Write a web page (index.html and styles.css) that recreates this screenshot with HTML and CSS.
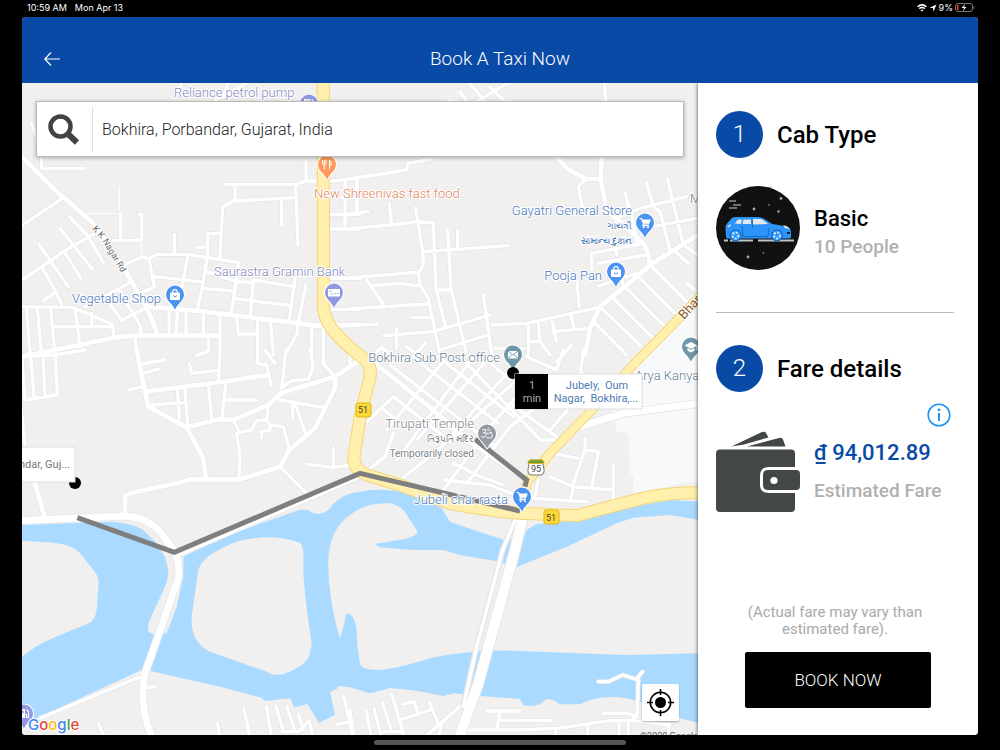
FILE: index.html
```html
<!DOCTYPE html>
<html lang="en">
<head>
  <meta charset="UTF-8" />
  <meta name="viewport" content="width=device-width, initial-scale=1.0"/>
  <title>Book A Taxi Now</title>
  <link rel="stylesheet" href="styles.css">
</head>
<body>

  <!-- Status bar -->
  <div class="statusbar">
    <span>10:59 AM</span>
    <span>Mon Apr 13</span>
    <div class="status-icons">
      <svg width="10" height="8" viewBox="0 0 10 8" fill="none" stroke="#fff" stroke-width="1.5"><path d="M.5 2.8Q5-1 9.500 2.800M2.200 4.600Q5 2.300 7.800 4.600"/><path d="M3.500 6L5 7.600 6.500 6Q5 5 3.500 6Z" fill="#fff" stroke="none"/></svg>
      <svg width="8" height="8" viewBox="0 0 8 8"><path d="M7.500.5L4.500 7.500 4 4 .5 3.700Z" fill="#fff"/></svg>
      <span>9%</span>
      <svg width="20" height="9" viewBox="0 0 20 9"><rect x=".5" y=".5" width="17" height="8" rx="2.500" fill="none" stroke="#777"/><path d="M18.500 3v3q1-.5 1-1.500t-1-1.500Z" fill="#777"/><rect x="2" y="2" width="1.500" height="5" fill="#ff3b30"/><path d="M10 1L6.500 5H9L8 8l3.500-4H9Z" fill="#fff"/></svg>
    </div>
  </div>

  <div class="app">
    <header>
      <button class="back-btn" aria-label="Back">
        <svg width="16" height="14" viewBox="0 0 16 14" fill="none" stroke="#fff" stroke-width="1.200"><path d="M16 7H1M7 .5L.8 7 7 13.500"/></svg>
      </button>
      <h1>Book A Taxi Now</h1>
    </header>

    <main>
      <!-- Map -->
      <div class="map">
        <svg class="map-canvas" viewBox="22 83 676 652" preserveAspectRatio="xMinYMin slice">
          <defs>
            <path id="pin" d="M0 0C-1-5-9-9-9-15.500A9 9 0 1 1 9-15.500C9-9 1-5 0 0Z"/>
            <g id="cart"><path d="M-5.500-19.500h2l2 5.500h5l1.500-4h-7.500M-1.500-14l-.7 1.700H4" fill="none" stroke="#fff" stroke-width="1.200"/><path d="M-2.700-18h7.500L3.500-14.500h-5Z" fill="#fff"/><circle cx="-1.300" cy="-10.700" r="1" fill="#fff"/><circle cx="3" cy="-10.700" r="1" fill="#fff"/></g>
            <g id="bag"><rect x="-5" y="-17.500" width="10" height="7.500" rx="1" fill="#fff"/><path d="M-2.300-17v-1a2.300 2.300 0 0 1 4.600 0v1" fill="none" stroke="#fff" stroke-width="1.200"/></g>
            <g id="fuel"><path d="M-5-20h6v9h-6Z" fill="#fff"/><path d="M-3.500-18.500h3v3h-3Z" fill="#8f98e0"/><path d="M1-14.500h1.500v3h2v-6l-2-2" fill="none" stroke="#fff" stroke-width="1.200"/></g>
            <path id="kk" d="M92 229L101 239L125 279"/>

            <!-- road geometry is kept at three units per map pixel -->
            <g id="streets">
              <path d="M545 250L530 285M685 250L670 290M645 300L740 250M1345 300L1375 305M1380 275L1405 310M1410 250L1455 305M1420 310L1540 240M1470 260L1515 305M1813 249L1818 305M95 370L120 440"/>
              <path transform="translate(60 465)" d="M65 5V40H195M5 212L130 128M5 375L65 335L130 290L230 232M148 185L205 245L250 322M120 220L217 342M57 268L145 395M65 335L105 405L125 448M70 437L105 412M133 290L183 370M302 175V255M280 256H365V178H358M318 328L368 305L385 312L410 298H500L655 322L650 375L632 480M463 238V295M530 277H563V236H600M563 277V300M612 88H830L858 78H895M858 20V78M645 90V135M827 128L640 138L608 155L600 305M785 135V210M827 92L834 270M388 315L403 395L370 412M403 365L545 380M503 305L488 385L470 460M563 300L548 390L532 465M560 350L650 380L700 382L690 485M548 400L640 408M700 375L825 395M640 430L810 452M825 370L808 495M858 390L835 500L830 540L795 600M335 380L195 455M265 440L305 495L380 458M300 410L360 510L363 535M10 455L160 458L260 500L278 510L282 548M100 515H278M20 460L30 600M52 460L65 600M92 460L105 600M165 460L180 575M215 475V508M345 548L352 600M447 472V535M472 475L468 535M498 475V535M550 480V535M600 485V600M565 548V590L530 600M650 490L655 537H710M713 500V600M752 500L760 600M875 515V600M910 515V600M930 370H1020M935 463H1020M930 178H1020M930 222H1020M975 75V220M1010 70V170M925 80L1020 68M965 128H1020"/>
              <path transform="translate(1050 465)" d="M0 72L168 45L175 25L245 12M22 70V170M0 175L55 170M0 220L125 210L195 200L250 203L258 400L285 510M118 145L125 210M197 158L218 290L220 330L205 355L210 390L235 430L268 590M0 368L205 352M50 375L105 455M0 462L105 455L235 447M65 393L145 385L210 393M187 488H240M0 508H80M100 542L250 530L420 480M140 520V580M218 290L475 272M293 225L303 400L348 590M323 228V275M260 405H300M400 420L410 490L425 600M268 585L415 540M425 510L530 505L745 457M535 505V600M565 500L570 560L600 600M605 490L620 560M610 530L715 520M663 478L672 520M680 370L688 455M540 560H570M75 595L95 578L120 595M170 575L210 605M225 565L190 605M435 580H520M620 620L665 570M800 190L870 160L1010 125M905 215L1040 190M825 115L845 180L860 260M890 85L910 155L930 170L960 285M952 70L1000 270L1044 300M970 285L1015 325M725 345V295L880 265M745 325L895 298M745 393L890 345M800 280V300M810 350L820 390M905 335L1010 440M870 370L980 480M830 400L945 515M790 430L910 550M755 460L870 570M730 500L830 600M1010 385L1035 405M700 170L685 95L708 72"/>
              <path transform="translate(60 1050)" d="M0 20L105 15L195 0M30 0L42 140M68 0L75 138M105 0L112 135L15 150M5 20L15 150M0 150L15 285M365 42L433 30M370 70L415 57M327 120L370 110M600 0L595 95M508 42L515 70L590 62M530 15L565 5M472 115L478 205M495 115L503 225M390 165L495 158M565 102L575 208M618 98L605 208M615 150H710M713 0V40L740 45L753 105M735 0L765 40M798 0L785 115M790 110L815 92L865 88L880 50L870 0M910 0V40L945 80M780 150L910 172M818 155V205M825 160L860 260M745 165L740 210L750 225L790 230L808 300M750 225V240L725 245V262M740 210L710 212L695 240L660 248M640 210L660 248L650 250L660 325L657 380M780 350L860 430M863 343L940 352L1000 345M940 293V350M990 0V40"/>
              <path transform="translate(1050 1050)" d="M130 140L300 275M100 178L175 240M120 45L430 285M200 30L445 220M265 20L490 200M330 20L570 268M400 20L480 90M480 160L620 260M50 215L125 145M110 240L275 40M140 330L200 250L370 20M150 390L265 300M200 270L420 20M265 300L480 60M300 270L500 90M280 420L420 230L500 140M350 400L480 230L560 170M60 355L105 320L130 250M285 390L420 405L485 430M310 340L380 375L460 405M600 380L670 410L790 420M790 345V450M550 445L710 455M565 390L555 440M670 410L662 450M610 310L685 325M705 265V300L745 305L725 415M705 300L670 400M570 270H615M530 20L620 60M640 0L620 60M700 0L690 80M640 195L700 130L700 70M600 240L640 195"/>
              <path transform="translate(60 1650)" d="M60 505L350 385L375 378M380 412L405 410M235 522L255 565M593 522L600 565M672 475L690 565M740 470L755 565M768 468L790 545M800 468L825 545M835 492L850 540M785 545H835L868 512L880 565M972 440L1000 565M950 523L990 515"/>
              <path transform="translate(1050 1650)" d="M0 480L12 565M48 480L65 565M72 475L95 565M98 458L125 545M125 433L160 550M158 463L192 455L205 490M150 510L240 480M238 458L265 520M335 465L220 565M100 545H160M275 520L265 565M412 483H508M450 487L440 540M450 511H603M355 540H500L620 535L780 512H850L960 525M617 545V565M713 530V565M760 490H835L860 500M807 515V565M835 515V565M955 520V565M745 395H775L818 375L860 388M878 365L865 380L862 490L845 510"/>
            </g>
            <g id="avenues">
              <path transform="translate(60 465)" d="M0 0L35 35L105 105L220 205L245 240L318 350L380 458L410 530M380 455L540 468L890 512L1020 510M5 605L282 548L345 542H595"/>
              <path transform="translate(1050 465)" d="M620 5L650 40L708 72H752M755 5L752 72L770 170L800 190L880 265L895 295L900 330L1044 240M900 330L825 395L750 455L720 520L705 600"/>
              <path transform="translate(60 1050)" d="M45 400L65 470L72 495M350 0L375 125L385 170L500 232L550 325L557 380M375 125L560 102L745 75M500 232L600 208L640 210L745 165L785 128L945 80L1020 30M945 80V115L885 235L808 300L780 350M315 490V440L330 430L470 400L510 388H660L780 350"/>
              <path transform="translate(1050 1050)" d="M75 40L250 180L360 275L530 390"/>
            </g>
            <g id="arterials">
              <path d="M55 1562L370 1548Q440 1550 480 1595L525 1655Q545 1710 530 1750L435 2020Q415 2110 455 2210M1740 1280L1870 1240L2100 1210"/>
              <path d="M535 1660L1080 1425"/>
            </g>
            <path id="highway51" d="M970 240V920Q975 960 995 985Q1030 1030 1090 1075Q1120 1100 1108 1140L1080 1250L1062 1370Q1060 1410 1100 1425L1200 1455L1350 1510Q1450 1530 1560 1540L1730 1547Q1850 1515 1950 1490Q2010 1478 2110 1478"/>
            <path id="highway95" d="M2110 880L1900 1095L1790 1215L1650 1360L1580 1450L1560 1535"/>
          </defs>

          <rect class="land" x="0" y="0" width="720" height="760"/>
          <g transform="scale(.33333)">
            <path class="campus" d="M2100 905L1930 1070L1830 1195L1850 1295L1885 1300L1890 1420L1900 1430V1480L2100 1440Z"/>
            <path class="water" d="M60 1575L340 1565Q400 1570 430 1590L465 1625L495 1670L505 1710Q505 1740 495 1760L445 1870V1895L460 1902L500 1900L530 1820L550 1730V1670L660 1615L890 1532Q910 1525 930 1533Q950 1553 985 1530Q1020 1480 1080 1475Q1130 1464 1200 1475L1270 1500L1325 1525L1350 1565L1450 1600L1515 1620H1570L1580 1590L1610 1572L1750 1560L1900 1520L2010 1500L2100 1505V2170L2040 2155L1920 2105Q1840 2080 1770 2100L1740 2113H1680L1660 2100L1640 2097L1620 2113L1595 2118L1570 2116L1560 2097L1440 2088L1360 2080L1330 2088L1250 2072L1170 2064L1110 2080L1050 2062L1015 2058L1010 2068L990 2075L1005 2145L957 2168L922 2112L882 2122L872 2095L840 2098L795 2103L785 2093L660 2060L480 2020L430 2008L120 2150L60 2180Z"/>
            <path class="land" d="M60 1622L160 1628Q220 1635 240 1660L285 1715Q300 1740 295 1760L290 1830Q285 1860 270 1868L150 1918Q110 1935 60 1975Z"/>
            <path class="land" d="M630 1665Q700 1620 760 1615Q830 1605 900 1628Q910 1640 910 1660V1720Q915 1800 935 1930L928 1970Q910 2000 850 2023Q820 2028 800 2015L630 1955Q570 1925 575 1850L595 1710Q600 1690 630 1665Z"/>
            <path class="land" d="M1050 1545Q1100 1505 1170 1510Q1210 1520 1220 1545L1250 1590Q1260 1605 1210 1618L1125 1632L1140 1642L1240 1650L1330 1650L1380 1665L1500 1685L1545 1703L1700 1640L1850 1570L1900 1553L2010 1545L2100 1560V1960L1880 1965L1540 1952Q1400 1950 1290 1975Q1180 2010 1130 2010Q1085 2010 1080 1990Q1070 1940 1070 1890Q1065 1850 1045 1840Q1035 1840 1035 1860L1020 1917Q985 1800 985 1690Q985 1590 1050 1545Z"/>
            <path class="lane" d="M358 640H268M358 560V640M425 721V760"/>

            <use href="#streets" class="street-edge"/>
            <use href="#avenues" class="avenue-edge"/>
            <use href="#arterials" class="arterial-edge"/>
            <use href="#streets" class="street"/>
            <use href="#avenues" class="avenue"/>
            <use href="#arterials" class="arterial"/>

            <!-- bridge -->
            <path class="bridge-edge" d="M1568 1550L1545 1650L1435 2050L1375 2220"/>
            <path class="avenue-edge" d="M1545 1560L1508 1650L1430 1940L1390 2120"/>
            <path class="street" d="M1545 1560L1508 1650L1430 1940L1390 2120"/>
            <path class="bridge" d="M1568 1550L1545 1650L1435 2050L1375 2220"/>

            <use href="#highway95" class="minor-highway-edge"/>
            <use href="#highway51" class="highway-edge"/>
            <use href="#highway95" class="minor-highway"/>
            <use href="#highway51" class="highway"/>

            <path class="route" d="M232 1553L523 1657L1080 1420L1560 1533M1425 1318L1580 1440L1575 1460"/>
          </g>

          <!-- road numbers -->
          <g class="shield">
            <rect x="356" y="403" width="15" height="14" rx="2"/><text x="363" y="413">51</text>
            <rect x="544" y="510" width="15" height="14" rx="2"/><text x="551" y="521">51</text>
            <path class="shield-white" d="M528 462l2-2h12l2 2-1 3q3 9-2 10h-10q-5-1-2-10Z"/><path d="M528 461.500l2-1.500h12l2 1.500-.5 2h-15Z" fill="#5f9e3c"/><text x="536" y="472">95</text>
          </g>

          <!-- place labels -->
          <g class="labels">
            <text class="road-name"><textPath href="#kk">K K Nagar Rd</textPath></text>
            <text class="highway-name" transform="translate(684 320) rotate(-48)">Bhar</text>
            <text class="civic" x="690" y="203">M</text>
            <text class="fuel" x="174" y="97">Reliance petrol pump</text>
            <text class="food" x="314" y="198">New Shreenivas fast food</text>
            <text class="fuel" x="214" y="276">Saurastra Gramin Bank</text>
            <text class="shop" x="72" y="303">Vegetable Shop</text>
            <text class="shop end" x="632" y="215">Gayatri General Store</text>
            <text class="shop end local" x="632" y="229">ગાયત્રી</text>
            <text class="shop end local" x="632" y="244">સામાન્ય દુકાન</text>
            <text class="shop end" x="602" y="280">Pooja Pan</text>
            <text class="civic end" x="500" y="362">Bokhira Sub Post office</text>
            <text class="civic" x="635" y="380">Arya Kanya</text>
            <text class="temple end" x="474" y="428">Tirupati Temple</text>
            <text class="temple end local" x="474" y="442">તિરૂપતિ મંદિર</text>
            <text class="temple end small" x="474" y="457">Temporarily closed</text>
            <text class="shop end" x="508" y="504">Jubeli char rasta</text>
          </g>

          <!-- pins -->
          <g class="pin fuel-pin" transform="translate(309 119)"><use href="#pin"/><use href="#fuel"/></g>
          <g class="pin fuel-pin" transform="translate(24 729)"><use href="#pin"/><use href="#fuel"/></g>
          <g class="pin food-pin" transform="translate(327 180)"><use href="#pin"/><path d="M-4.500-20v3q0 1.500 1.700 1.500T-1-17v-3M-2.700-20v9.500M2.500-10.500v-9.500q2 1 2 5h-2" fill="none" stroke="#fff" stroke-width="1.300"/></g>
          <g class="pin bank-pin" transform="translate(334 308)"><use href="#pin"/><rect x="-6" y="-19" width="12" height="7.500" fill="#fff" stroke="none"/><path d="M-4.500-17h2M-3-14h1.500M0-14.500h1.500M3-14.500h1.500" stroke="#8f98e0" stroke-width="1.500"/></g>
          <g class="pin shop-pin" transform="translate(175 310)"><use href="#pin"/><use href="#bag"/><path d="M-2-14.500q2 3 4 0" fill="none" stroke="#4a94f0"/></g>
          <g class="pin shop-pin" transform="translate(645 238)"><use href="#pin"/><use href="#cart"/></g>
          <g class="pin shop-pin" transform="translate(616 287)"><use href="#pin"/><use href="#bag"/><path d="M-2-14.500q2 3 4 0" fill="none" stroke="#4a94f0"/></g>
          <g class="pin shop-pin" transform="translate(522 512)"><use href="#pin"/><use href="#cart"/></g>
          <g class="pin civic-pin" transform="translate(513 370)"><use href="#pin"/><rect x="-5" y="-19" width="10" height="7.500" fill="#fff" stroke="none"/><path d="M-5-19L0-15 5-19M-5-11.500L-1.500-15M5-11.500L1.500-15" fill="none" stroke="#6f97a8"/></g>
          <g class="pin civic-pin" transform="translate(691 362)"><use href="#pin"/><path d="M-6.500-16.500L0-20 6.500-16.500 0-13ZM-3.500-14v2.500L0-9.500l3.500-2V-14L0-12Z" fill="#fff" stroke="none"/><path d="M6-16v4.500" stroke="#fff"/></g>
          <g class="pin temple-pin" transform="translate(487 449)"><use href="#pin"/><path d="M-5-19q4-1.500 3.500 1t-2.500 1.500q4 0 3 3t-5 1M-1-16q3 1.500 4-.5t2 2-2.500 3.500-3-1M-.5-19.500q2 2 4 0M1.500-21.500v1" fill="none" stroke="#fff" stroke-width="1.300"/></g>

          <!-- pick-up and drop -->
          <circle cx="513" cy="373" r="6"/>
          <circle cx="75" cy="483" r="6"/>
          <g class="stop">
            <rect class="stop-card" x="515" y="374" width="127" height="35"/>
            <rect x="515" y="374" width="33" height="35"/>
            <text class="eta" x="532" y="389">1</text>
            <text class="eta" x="532" y="402">min</text>
            <text class="address" x="597" y="389">Jubely, &nbsp;Oum</text>
            <text class="address" x="596" y="402">Nagar, &nbsp;Bokhira,...</text>
          </g>
          <g class="stop">
            <rect class="stop-card" x="10" y="447" width="65" height="35"/>
            <text class="from" x="70" y="468">ndar, Guj...</text>
          </g>

          <text class="google" x="28" y="730"><tspan fill="#4285f4">G</tspan><tspan fill="#ea4335">o</tspan><tspan fill="#fbbc05">o</tspan><tspan fill="#4285f4">g</tspan><tspan fill="#34a853">l</tspan><tspan fill="#ea4335">e</tspan></text>
          <text class="copyright" x="640" y="739">©2020 Google</text>
        </svg>

        <form class="search">
          <label for="pickup">
            <svg width="32" height="32" viewBox="0 0 32 32" fill="none" stroke="#424242" aria-label="Pick-up location"><circle cx="12.500" cy="12.500" r="10" stroke-width="4.500"/><path d="M20 20L29 28.500" stroke-width="6"/></svg>
          </label>
          <input type="text" id="pickup" value="Bokhira, Porbandar, Gujarat, India">
        </form>

        <button class="locate-btn" aria-label="My location">
          <svg width="27" height="27" viewBox="0 0 27 27" fill="none" stroke="#000" stroke-width="1.600"><circle cx="13.500" cy="13.500" r="10.200"/><circle cx="13.500" cy="13.500" r="5.500" fill="#000" stroke="none"/><path d="M13.500 0v6M13.500 21v6M0 13.500h6M21 13.500h6"/></svg>
        </button>
      </div>

      <!-- Booking details -->
      <aside>
        <section>
          <h2><span class="step">1</span>Cab Type</h2>
          <div class="row cab">
            <svg width="84" height="84" viewBox="0 0 84 84">
              <circle cx="42" cy="42" r="42" fill="#111"/>
              <path d="M13 15h7M17 19h8M13 22h8" stroke="#ccc" stroke-width="1.200"/>
              <g fill="#aaa"><circle cx="38" cy="23" r="1.400"/><circle cx="65" cy="12.500" r="1.400"/><circle cx="62.500" cy="25.500" r="1.200"/><circle cx="53" cy="19" r=".8"/><circle cx="32" cy="71" r="1.400"/><circle cx="47.500" cy="67" r=".8"/></g>
              <path d="M8 54.500h4M14 54.500h23M42 54.500h36" stroke="#bfc5c5" stroke-width="2"/>
              <path d="M10 51l-.5-10q0-2 2-4l3.500-4q1-2 5-2h22q4 0 8 3l6 4q10 1 17 4 2 1 2 5v4q0 1.500-3 1.500H13q-3 0-3-1.500Z" fill="#2b95fb"/>
              <path d="M19 37.500l2-3q.5-1 2-1h3l-1 4.500ZM27.500 33.500h7.500v4.500h-8.500ZM37 33h7q3 0 8 5l-15 .5Z" fill="#e4e8ec"/>
              <path d="M11 41l4-3.500-1 3.500ZM67 39q5 1 7 4l-5-1Z" fill="#e4e8ec"/>
              <path d="M26.500 50.500H52M36 33l1 9M26 40l1 10M53 42l-1 8" stroke="#1769bd" fill="none"/>
              <path d="M71 47h3" stroke="#123" stroke-width="2"/>
              <g fill="#2b95fb" stroke="#155fae"><circle cx="19.500" cy="49.500" r="5.500"/><circle cx="61" cy="49.500" r="5.500"/></g>
              <g fill="none" stroke="#d6e9fb" stroke-width="2" stroke-dasharray="2 1.500"><circle cx="19.500" cy="49.500" r="3"/><circle cx="61" cy="49.500" r="3"/></g>
            </svg>
            <div>
              <p class="name">Basic</p>
              <p class="sub">10 People</p>
            </div>
          </div>
        </section>

        <hr>

        <section>
          <h2><span class="step">2</span>Fare details</h2>
          <button class="info-btn" aria-label="Fare information">
            <svg width="24" height="24" viewBox="0 0 24 24" fill="none" stroke="#1e96f5" stroke-width="2"><circle cx="12" cy="12" r="10.800" stroke-width="1.600"/><path d="M12 10v8"/><circle cx="12" cy="6.800" r="1.400" fill="#1e96f5" stroke="none"/></svg>
          </button>
          <div class="row fare">
            <svg width="84" height="81" viewBox="0 0 84 81" fill="#444747">
              <path d="M15.500 15.500L46 1q3-1 4 1l2.500 4.500L28 13.500ZM31 15.500L63 7q3-1 4 1.500l2.500 7Z"/>
              <path d="M4 18.500h71q4 0 4 4V36H53q-9 0-9 9v9q0 8 9 8h26v15q0 4-4 4H4q-4 0-4-4V22.500q0-4 4-4Z"/>
              <path d="M52 39h28q4 0 4 4v12q0 4-4 4H52q-5 0-5-5V44q0-5 5-5Z"/>
              <circle cx="58" cy="49.500" r="3.600" fill="#fff"/>
            </svg>
            <div>
              <p class="name amount">₫ 94,012.89</p>
              <p class="sub">Estimated Fare</p>
            </div>
          </div>
        </section>

        <div class="book">
          <p>(Actual fare may vary than estimated fare).</p>
          <button class="book-btn">BOOK NOW</button>
        </div>
      </aside>
    </main>
  </div>

  <div class="home-bar"></div>

</body>
</html>
```
FILE: styles.css
```css
:root {
  --blue: #084aa6;
  --grey: #a9a9a9;
}

* { box-sizing: border-box; }

body {
  margin: 0;
  min-height: 100vh;
  display: flex;
  flex-direction: column;
  font-family: Roboto, 'Noto Sans', sans-serif;
  background: #000;
  color: #000;
}

button {
  border: none;
  padding: 0;
  background: none;
  font-family: inherit;
  cursor: pointer;
}

svg { display: block; }
p, h1, h2 { margin: 0; }

.statusbar {
  display: flex;
  align-items: center;
  gap: 8px;
  height: 17px;
  padding: 0 25px 2px 27px;
  color: #fff;
  font-family: Inter, sans-serif;
  font-size: 9px;
  line-height: 15px;
}

.status-icons {
  display: flex;
  align-items: center;
  gap: 2px;
  margin-left: auto;
}

.app {
  flex: 1;
  display: flex;
  flex-direction: column;
  margin: 0 22px;
  border-radius: 4px;
  overflow: hidden;
  background: #fff;
}

header {
  position: relative;
  z-index: 1;
  display: flex;
  align-items: center;
  height: 66px;
  padding: 18px 22px 0;
  background: var(--blue);
  color: #fff;
}

header h1 {
  flex: 1;
  margin-right: 16px;
  padding-bottom: 2px;
  text-align: center;
  font-size: 19px;
  font-weight: 300;
}

main {
  flex: 1;
  display: flex;
}

/* map */
.map {
  position: relative;
  flex: 1;
  overflow: hidden;
  background: #f1f0ef;
}

.map-canvas {
  position: absolute;
  width: 100%;
  height: 100%;
}

.land { fill: #f1f0ef; }
.water { fill: #aadaff; }
.campus { fill: #f8f9fb; }

.street, .street-edge, .avenue, .avenue-edge, .arterial, .arterial-edge,
.bridge, .bridge-edge, .highway, .highway-edge, .minor-highway,
.minor-highway-edge, .lane, .route {
  fill: none;
  stroke: #fff;
  stroke-linecap: round;
  stroke-linejoin: round;
}

.lane { stroke-width: 3; }
.street { stroke-width: 10; }
.avenue { stroke-width: 14; }
.arterial { stroke-width: 21; }
.bridge { stroke-width: 30; }
.street-edge { stroke: #e4e6ea; stroke-width: 14; }
.avenue-edge { stroke: #e4e6ea; stroke-width: 18; }
.arterial-edge { stroke: #e4e6ea; stroke-width: 26; }
.bridge-edge { stroke: #e4e6ea; stroke-width: 36; }
.highway { stroke: #fff0ae; stroke-width: 33; }
.highway-edge { stroke: #f5d478; stroke-width: 39; }
.minor-highway { stroke: #fff0ae; stroke-width: 23; }
.minor-highway-edge { stroke: #f5d478; stroke-width: 29; }

.route {
  stroke: #7f7f7f;
  stroke-width: 15;
  stroke-linecap: butt;
  stroke-linejoin: miter;
}

.labels text {
  font-size: 13px;
  font-weight: 300;
  stroke: #fff;
  stroke-width: 2px;
  paint-order: stroke;
}

.labels .small { font-size: 10px; font-weight: 400; }
.labels .local { font-size: 9px; font-weight: 400; }
.labels .end { text-anchor: end; }
.labels .road-name { font-size: 9px; font-weight: 400; fill: #666; }
.labels .highway-name { font-weight: 400; fill: #8a5a2b; }
.labels .fuel { fill: #7f88c0; }
.labels .shop { fill: #4678bb; }
.labels .food { fill: #e08560; }
.labels .civic { fill: #5f7f90; }
.labels .temple { fill: #80858c; }

.pin { stroke: #fff; stroke-width: 2px; paint-order: stroke; }
.pin use + use { stroke: none; }
.pin path { stroke-width: 1px; }
.shop-pin { fill: #4a94f0; }
.fuel-pin, .bank-pin { fill: #8f98e0; }
.food-pin { fill: #ff9a5c; }
.civic-pin { fill: #6f97a8; }
.temple-pin { fill: #949ba3; }

.shield {
  fill: #fdd835;
  stroke: #e0b41c;
}

.shield .shield-white { fill: #fff; stroke: #777; }
.shield text {
  font-size: 9px;
  text-anchor: middle;
  fill: #444;
  stroke: none;
}

.stop text { font-size: 11px; text-anchor: middle; }
.stop-card { fill: #fff; stroke: #ddd; }
.stop .eta { fill: #aaa; }
.stop .address { fill: #4f7cb6; }
.stop .from { fill: #777; text-anchor: end; }

.google {
  font-family: Inter, sans-serif;
  font-size: 15px;
  font-weight: 500;
  stroke: #fff;
  stroke-width: 2px;
  paint-order: stroke;
}

.copyright { font-size: 9px; fill: #666; }

.search {
  position: absolute;
  top: 18px;
  left: 14px;
  right: 14px;
  display: flex;
  align-items: center;
  height: 56px;
  background: #fff;
  border: 1px solid #bbb;
  box-shadow: 0 1px 4px rgba(0,0,0,0.3);
}

.search label {
  padding: 7px 12px 6px 11px;
  border-right: 1px solid #ddd;
}

.search input {
  flex: 1;
  min-width: 0;
  padding: 0 9px;
  border: none;
  outline: none;
  background: none;
  font-family: inherit;
  font-size: 16px;
  font-weight: 300;
  color: #222;
}

.locate-btn {
  position: absolute;
  right: 19px;
  bottom: 14px;
  display: flex;
  align-items: center;
  justify-content: center;
  width: 37px;
  height: 37px;
  border-radius: 2px;
  background: #fff;
  box-shadow: 0 1px 2px rgba(0,0,0,0.3);
}

/* booking panel */
aside {
  position: relative;
  display: flex;
  flex-direction: column;
  width: 280px;
  padding: 28px 24px 27px 18px;
  background: #fff;
  box-shadow: 0 0 4px rgba(0,0,0,0.7);
}

h2 {
  display: flex;
  align-items: center;
  gap: 14px;
  font-size: 24px;
  font-weight: 500;
}

.step {
  width: 47px;
  height: 47px;
  border-radius: 50%;
  background: var(--blue);
  color: #fff;
  font-weight: 300;
  line-height: 47px;
  text-align: center;
}

.row {
  display: flex;
  align-items: center;
  gap: 14px;
}

.cab { margin-top: 28px; }
.cab div { padding-top: 10px; }
.fare { margin-top: 4px; }

.name {
  font-size: 22px;
  font-weight: 500;
  line-height: 28px;
}

.sub {
  font-size: 19px;
  font-weight: 500;
  line-height: 28px;
  color: #b0b0b0;
}

.amount { color: var(--blue); margin-bottom: 10px; }

hr {
  width: 100%;
  margin: 42px 0 32px;
  border: none;
  border-top: 1px solid #bbb;
}

.info-btn {
  display: block;
  margin: 11px 3px 0 auto;
}

.book {
  margin-top: auto;
  padding-top: 24px;
  text-align: center;
}

.book p {
  padding: 0 30px;
  font-size: 15px;
  line-height: 17px;
  color: var(--grey);
}

.book-btn {
  width: 186px;
  height: 56px;
  margin: 14px 0 0 6px;
  border-radius: 2px;
  background: #000;
  color: #fff;
  font-size: 17px;
  font-weight: 300;
}

.home-bar {
  width: 252px;
  height: 5px;
  margin: 5px auto;
  border-radius: 3px;
  background: #555;
}
```
